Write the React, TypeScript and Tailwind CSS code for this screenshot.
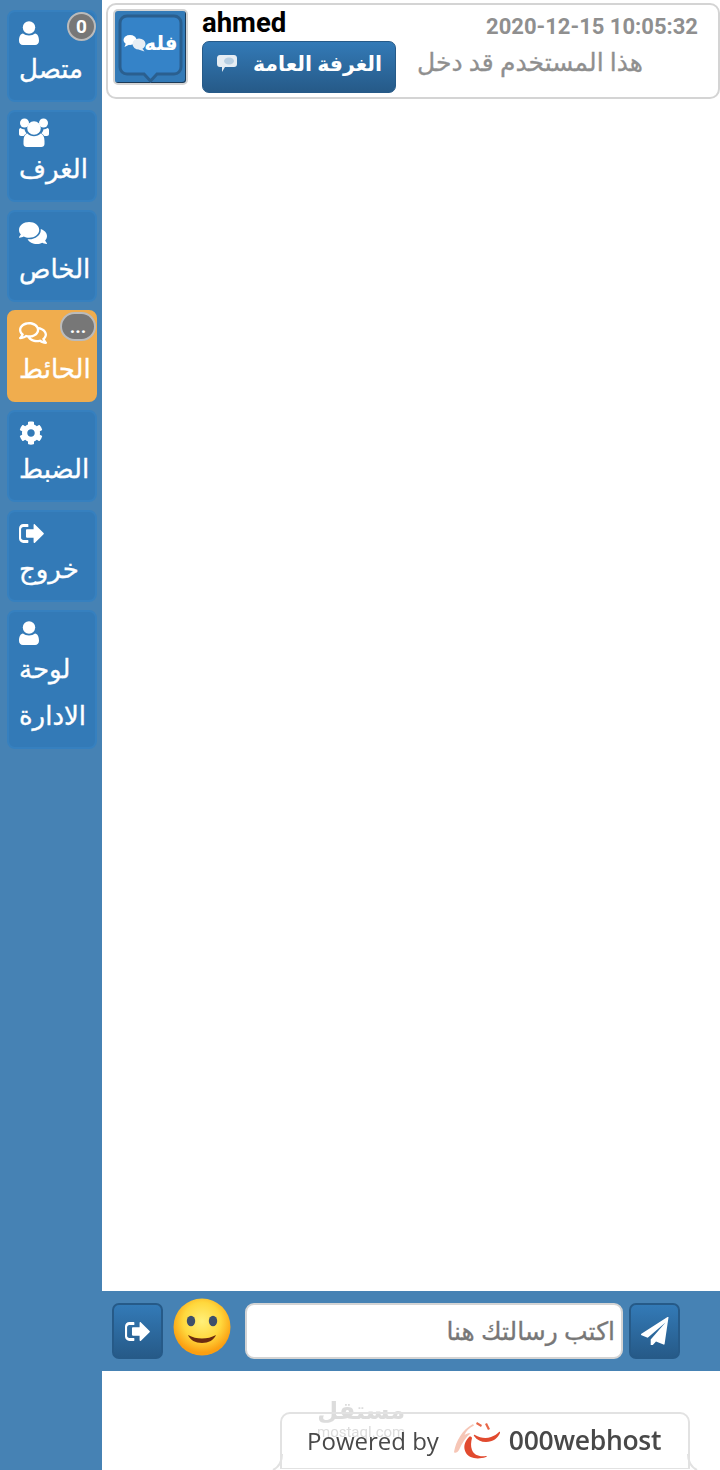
import { FaComments, FaRegComments, FaCog } from "react-icons/fa";

const ARABIC = "font-['Roboto','Liberation_Sans','DejaVu_Sans',sans-serif]";

function UserIcon({ className }: { className?: string }) {
  return (
    <svg viewBox="0 0 20 24" className={className} fill="white">
      <circle cx="10" cy="6.5" r="6.2" />
      <path d="M4 12.500c1.500 1.300 3.600 2 6 2s4.500-.7 6-2c2.600.4 4 3 4 7.300 0 2.600-1.500 4.200-4 4.200H4c-2.500 0-4-1.600-4-4.200 0-4.300 1.400-6.900 4-7.300z" />
    </svg>
  );
}

function UsersIcon({ className }: { className?: string }) {
  return (
    <svg viewBox="0 0 30 30" className={className} fill="white">
      <circle cx="5.500" cy="5" r="4.500" />
      <circle cx="24.500" cy="5" r="4.500" />
      <path d="M0 12c0-1 .7-2 1.500-2 1 .8 2.500 1.300 4 1.300.3 1.600 1 3 2.200 4-1.300.8-2.300 1.700-3 2.700H2c-1.200 0-2-.8-2-2v-4zM30 12c0-1-.7-2-1.500-2-1 .8-2.500 1.300-4 1.300-.3 1.600-1 3-2.200 4 1.300.8 2.300 1.700 3 2.700H28c1.200 0 2-.8 2-2v-4z" />
      <circle cx="15" cy="10" r="6.800" />
      <path d="M8.500 15.500c1.500 1.700 3.900 2.800 6.500 2.800s5-1.100 6.500-2.800c2.400.5 4 3 4 7.500v3c0 2-1.400 3-3.200 3H7.700c-1.800 0-3.200-1-3.200-3v-3c0-4.500 1.600-7 4-7.500z" />
    </svg>
  );
}

function SignOutIcon({ className }: { className?: string }) {
  return (
    <svg viewBox="0 0 24 20" className={className} fill="white">
      <path d="M9 1.500v1.700c0 .4-.3.6-.6.600H4.200C3 3.800 2 4.800 2 6v8c0 1.200 1 2.200 2.200 2.200h4.200c.3 0 .6.200.6.600v1.700c0 .4-.3.600-.6.600H4.200C1.900 19.100 0 17.200 0 14.900V5.100C0 2.800 1.900.9 4.200.9h4.200c.3 0 .6.200.6.600z" />
      <path d="M14 1.500c0-.6.700-.9 1.100-.5l8.500 8.400c.4.300.4.900 0 1.200L15.100 19c-.4.400-1.100.1-1.100-.5V14H7.500c-.5 0-.8-.4-.8-.8V6.800c0-.4.300-.8.800-.8H14V1.500z" />
    </svg>
  );
}

function PlaneIcon({ className }: { className?: string }) {
  return (
    <svg viewBox="0 0 28 28" className={className} fill="white">
      <path d="M27.500.2 23.600 27c-.1.500-.6.800-1.100.6l-7.500-3.100-4.300 4.700c-.4.400-1 .1-1-.4v-6.200L24.500 5.500 6.700 20.800.5 18.200c-.6-.2-.7-1.100-.1-1.400L26.500 0c.5-.3 1.100.1 1 .2z" />
    </svg>
  );
}

function ChatLogo() {
  return (
    <div className="w-[75px] h-[76px] rounded-[5px] border-[2px] border-[#d4d4d4] bg-[#337ab7] shadow-[inset_-1px_-1px_0_#1d3b57] flex items-center justify-center shrink-0">
      <svg viewBox="0 0 71 72" className="w-[71px] h-[72px]">
        <path d="M12 5h47c4 0 7 3 7 7v44c0 4-3 7-7 7H42l-6.500 7-6.500-7H12c-4 0-7-3-7-7V12c0-4 3-7 7-7z" fill="#3583c8" stroke="#2a5f8f" strokeWidth="3" />
        <ellipse cx="15" cy="29" rx="6.500" ry="5" fill="white" />
        <path d="M11 32l-1.500 4 5-2.500z" fill="white" />
        <ellipse cx="24" cy="33" rx="6.500" ry="5.500" fill="#e8eef4" />
        <path d="M27 37l2.500 3.500-6-2z" fill="#e8eef4" />
        <text x="46" y="39" fill="white" fontSize="20" fontWeight="700" fontFamily="DejaVu Sans" textAnchor="middle">فله</text>
      </svg>
    </div>
  );
}

function SpeechBubble() {
  return (
    <svg viewBox="0 0 22 20" className="w-[22px] h-[20px]">
      <path d="M4 1h14c2 0 3 1.500 3 3v6c0 2-1 3-3 3H9l-3 5v-5H4c-2 0-3-1-3-3V4c0-1.500 1-3 3-3z" fill="#e6edf3" />
      <ellipse cx="13" cy="7" rx="5" ry="3.500" fill="#b8cfe2" />
    </svg>
  );
}

function Smiley() {
  return (
    <svg viewBox="0 0 60 60" className="w-[60px] h-[60px] shrink-0 -mt-[8px] -ml-[1px]">
      <defs>
        <radialGradient id="face" cx="50%" cy="40%" r="55%">
          <stop offset="0%" stopColor="#fff07a" />
          <stop offset="60%" stopColor="#ffd83d" />
          <stop offset="100%" stopColor="#fb9f12" />
        </radialGradient>
      </defs>
      <circle cx="30" cy="30" r="28.500" fill="url(#face)" />
      <ellipse cx="19" cy="24" rx="4.200" ry="5.200" fill="#3d4f6b" />
      <ellipse cx="41" cy="24" rx="4.200" ry="5.200" fill="#3d4f6b" />
      <path d="M16 38c4.500 2.500 9 3.400 14 3.400s9.500-.9 14-3.400c-2 5-7.500 8-14 8s-12-3-14-8z" fill="#6b2a10" />
    </svg>
  );
}

function HostLogo() {
  return (
    <svg viewBox="0 0 48 40" className="w-[48px] h-[40px] shrink-0">
      <path d="M2 31C4 20 10 9 21 3l1 1.500C17 7 14 10 12.500 14c2.500-1.500 4.500-2 6-1.500C14 16 10 22 7 29c-1 2-4 4-5 2z" fill="#f6c6b6" />
      <path d="M17 16c-5 5-6 11-3 16 3 5 11 7 20 4 1-.3 1-1 0-1-7 1-12-1-14-6-1.500-4-1-8 0-12 0-1-2-2-3-1z" fill="#e14a2f" />
      <path d="M23 14c5 3 11 4 16 2 3-1 6-3 8-5 1-.5 1.500 0 1 1-2 5-7 9-14 9-5 0-9-2-12-6-.5-1 0-1.500 1-1z" fill="#e14a2f" />
      <path d="M25 1l5 3-1 2-5-3zM35 2l3 6-2 1-3-6z" fill="#e8684a" />
    </svg>
  );
}

type NavItem = {
  label: string;
  icon: React.ReactNode;
  active?: boolean;
  badge?: string;
  wide?: boolean;
};

const NAV: NavItem[] = [
  { label: "متصل", icon: <UserIcon className="w-[20px] h-[24px]" />, badge: "0" },
  { label: "الغرف", icon: <UsersIcon className="w-[30px] h-[30px]" /> },
  { label: "الخاص", icon: <FaComments className="w-[28px] h-[26px] text-white" /> },
  { label: "الحائط", icon: <FaRegComments className="w-[28px] h-[26px] text-white" />, active: true, badge: "...", wide: true },
  { label: "الضبط", icon: <FaCog className="w-[24px] h-[24px] text-white" /> },
  { label: "خروج", icon: <SignOutIcon className="w-[25px] h-[21px]" /> },
  { label: "لوحة الادارة", icon: <UserIcon className="w-[20px] h-[24px]" /> },
];

function SideButton({ item }: { item: NavItem }) {
  return (
    <div
      className={`relative w-[90px] min-h-[92px] rounded-[8px] border-[2px] px-[10px] pt-[8px] pb-[7px] text-white ${
        item.active ? "bg-[#f0ad4e] border-[#f0ad4e]" : "bg-[#337ab7] border-[#3680bf]"
      }`}
    >
      <div className="h-[26px] flex items-center">{item.icon}</div>
      <div
        dir="rtl"
        className={`${ARABIC} text-[26px] leading-[47px] text-left w-[72px] [-webkit-text-stroke:0.35px_white]`}
      >
        {item.label}
      </div>
      {item.badge && (
        <span
          className={`absolute top-[0px] -right-[1px] h-[29px] rounded-full bg-[#777] border-[2px] border-[#bbb] flex items-center justify-center text-white font-bold font-['Roboto',sans-serif] text-[19px] leading-none ${
            item.wide ? "w-[36px]" : "w-[29px]"
          }`}
        >
          {item.badge}
        </span>
      )}
    </div>
  );
}

function SquareButton({ children }: { children: React.ReactNode }) {
  return (
    <div className="w-[51px] h-[56px] rounded-[7px] border-[2px] border-[#265a88] bg-gradient-to-b from-[#337ab7] to-[#265a88] flex items-center justify-center shrink-0">
      {children}
    </div>
  );
}

export default function App() {
  return (
    <div className="w-[720px] h-[1470px] flex bg-white overflow-hidden font-['Roboto',sans-serif]">
      <aside className="w-[102px] shrink-0 bg-[#4682b4] pl-[7px] pt-[10px] flex flex-col gap-[8px]">
        {NAV.map((item) => (
          <SideButton key={item.label} item={item} />
        ))}
      </aside>

      <main className="flex-1 min-w-0 flex flex-col">
        <div className="flex-1 pl-[4px] pt-[3px]">
          <div className="h-[96px] rounded-[10px] border-[2px] border-[#d4d4d4] bg-white flex pl-[5px] pr-[20px] pt-[4px] gap-[14px]">
            <ChatLogo />
            <div className="flex-1 min-w-0">
              <div className="flex justify-between items-center h-[32px]">
                <span className="text-[27.500px] font-bold text-black leading-none -mt-[4px]">ahmed</span>
                <span className="text-[22px] font-bold text-[#8f8f8f] leading-none mt-[4px]">2020-12-15 10:05:32</span>
              </div>
              <div className="flex items-center gap-[21px] h-[52px]">
                <div className="w-[194px] h-[52px] rounded-[7px] border border-[#265a88] bg-gradient-to-b from-[#337ab7] to-[#265a88] flex items-center justify-center gap-[15px] text-white shrink-0">
                  <span className="mb-[6px]">
                    <SpeechBubble />
                  </span>
                  <span dir="rtl" className={`${ARABIC} text-[20.500px] font-bold leading-none mb-[6px]`}>الغرفة العامة</span>
                </div>
                <span dir="rtl" className={`${ARABIC} text-[25px] text-[#8f8f8f] leading-none mb-[10px] [-webkit-text-stroke:0.3px_#8f8f8f]`}>هذا المستخدم قد دخل</span>
              </div>
            </div>
          </div>
        </div>

        <div className="h-[80px] shrink-0 bg-[#4682b4] flex items-center pl-[10px] pr-[40px] gap-[10px]">
          <SquareButton>
            <SignOutIcon className="w-[25px] h-[21px]" />
          </SquareButton>
          <Smiley />
          <div className="flex-1 h-[56px] ml-[3px] rounded-[9px] border-[2px] border-[#d4d4d4] bg-white flex items-center px-[6px]">
            <span dir="rtl" className={`${ARABIC} w-full text-[25px] text-[#777] leading-none [-webkit-text-stroke:0.3px_#777]`}>اكتب رسالتك هنا</span>
          </div>
          <div className="-ml-[4px]">
            <SquareButton>
              <PlaneIcon className="w-[28px] h-[28px]" />
            </SquareButton>
          </div>
        </div>

        <div className="h-[99px] shrink-0 relative flex items-end pl-[178px]">
          <div className="relative z-10 w-[410px] h-[57px] mb-[1px] rounded-t-[10px] border-[2px] border-b border-[#e2e2e2] flex items-center pl-[25px] gap-[13px] text-[#484848] text-[24px] font-['Open_Sans',sans-serif] blur-[0.5px]">
            <span className="whitespace-nowrap">Powered by</span>
            <div className="flex items-center gap-[9px]">
              <HostLogo />
              <span className="font-semibold text-[26.500px] tracking-[-0.3px]">000webhost</span>
            </div>
          </div>
          <svg viewBox="0 0 12 16" className="absolute left-[170px] bottom-0 w-[12px] h-[16px]" fill="none" stroke="#e2e2e2" strokeWidth="2">
            <path d="M10 0c0 8-3 13-9 16" />
          </svg>
          <svg viewBox="0 0 12 16" className="absolute left-[584px] bottom-0 w-[12px] h-[16px]" fill="none" stroke="#e2e2e2" strokeWidth="2">
            <path d="M2 0c0 8 3 13 9 16" />
          </svg>
          <div className="absolute left-[215px] top-[28px] flex flex-col items-center text-[#dcdcdc] leading-none blur-[0.5px]">
            <span className={`${ARABIC} text-[24px] font-bold`}>مستقل</span>
            <span className="text-[15px] mt-[2px]">mostaql.com</span>
          </div>
        </div>
      </main>
    </div>
  );
}
